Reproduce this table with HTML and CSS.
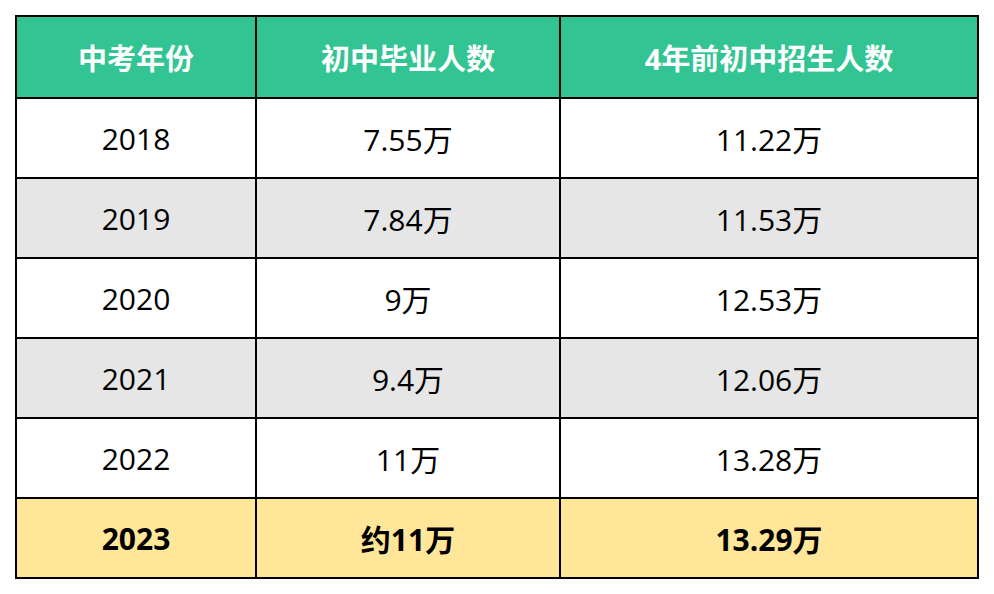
FILE: index.html
```html
<!DOCTYPE html>
<html lang="zh-CN">
<head>
<meta charset="utf-8">
<link rel="stylesheet" href="styles.css">
</head>
<body>
<div class="table">
  <div class="cell head">中考年份</div>
  <div class="cell head">初中毕业人数</div>
  <div class="cell head">4年前初中招生人数</div>

  <div class="cell">2018</div>
  <div class="cell">7.55万</div>
  <div class="cell">11.22万</div>

  <div class="cell alt">2019</div>
  <div class="cell alt">7.84万</div>
  <div class="cell alt">11.53万</div>

  <div class="cell">2020</div>
  <div class="cell">9万</div>
  <div class="cell">12.53万</div>

  <div class="cell alt">2021</div>
  <div class="cell alt">9.4万</div>
  <div class="cell alt">12.06万</div>

  <div class="cell">2022</div>
  <div class="cell">11万</div>
  <div class="cell">13.28万</div>

  <div class="cell hl">2023</div>
  <div class="cell hl">约11万</div>
  <div class="cell hl">13.29万</div>
</div>
</body>
</html>
```
FILE: styles.css
```css
html, body {
  margin: 0;
  padding: 0;
  background: #ffffff;
}
body {
  padding: 15px;
  font-family: "Open Sans", "Noto Sans CJK SC", sans-serif;
}
.table {
  width: 964px;
  box-sizing: border-box;
  display: grid;
  grid-template-columns: 238px 302px 416px;
  grid-template-rows: 80px repeat(6, 78px);
  gap: 2px;
  padding: 2px;
  background: #000000;
}
.cell {
  background: #ffffff;
  display: flex;
  align-items: center;
  justify-content: center;
  font-size: 30px;
  color: #000000;
}
.head {
  background: #32c492;
  color: #ffffff;
  font-weight: 700;
  font-size: 29px;
}
.alt {
  background: #e6e6e6;
}
.hl {
  background: #ffe699;
  font-weight: 700;
}
```
